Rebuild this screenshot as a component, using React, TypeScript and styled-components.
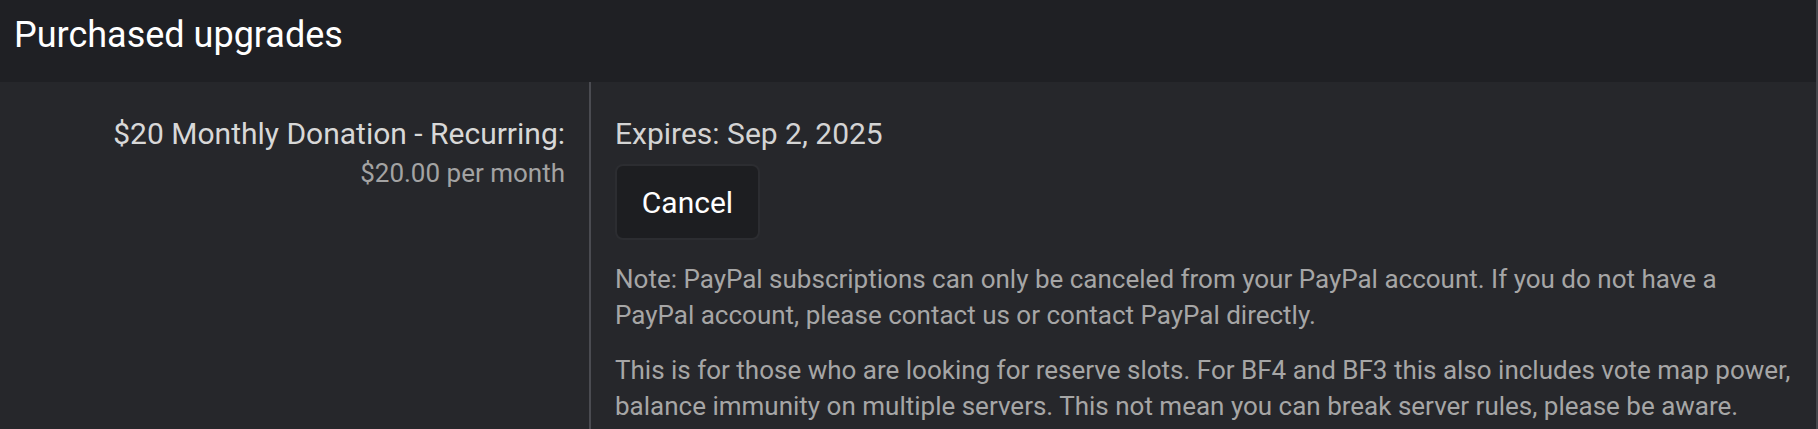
import React from "react"
import styled, { createGlobalStyle } from "styled-components"

const GlobalStyle = createGlobalStyle`
  html, body {
    margin: 0;
    padding: 0;
    background: #26272b;
    font-family: Roboto, "Liberation Sans", sans-serif;
  }
`

const upgrades = [
  {
    title: "$20 Monthly Donation - Recurring:",
    cost: "$20.00 per month",
    expires: "Sep 2, 2025",
    notes: [
      "Note: PayPal subscriptions can only be canceled from your PayPal account. If you do not have a PayPal account, please contact us or contact PayPal directly.",
      "This is for those who are looking for reserve slots. For BF4 and BF3 this also includes vote map power, balance immunity on multiple servers. This not mean you can break server rules, please be aware.",
    ],
  },
]

export default function App() {
  return (
    <>
      <GlobalStyle />
      <Block>
        <BlockHeader>Purchased upgrades</BlockHeader>
        {upgrades.map((u, i) => (
          <FormRow key={i}>
            <Label>
              <LabelTitle>{u.title}</LabelTitle>
              <LabelHint>{u.cost}</LabelHint>
            </Label>
            <Content>
              <Expires>Expires: {u.expires}</Expires>
              <Button type="button">Cancel</Button>
              {u.notes.map((n, j) => (
                <Explain key={j} $first={j === 0}>
                  {n}
                </Explain>
              ))}
            </Content>
          </FormRow>
        ))}
      </Block>
    </>
  )
}

const Block = styled.div`
  border-right: 2px solid #45464c;
  min-height: 429px;
  box-sizing: border-box;
`

const BlockHeader = styled.h2`
  margin: 0;
  height: 82px;
  box-sizing: border-box;
  padding: 10px 14px 0;
  background: #1f2024;
  color: #ffffff;
  font-size: 36px;
  font-weight: 400;
  line-height: 1.4;
`

const FormRow = styled.div`
  display: flex;
  min-height: 347px;
`

const Label = styled.div`
  flex: 0 0 591px;
  box-sizing: border-box;
  border-right: 2px solid #4a4b51;
  padding: 31px 24px 0 0;
  text-align: right;
`

const LabelTitle = styled.div`
  color: #d8d8d8;
  font-size: 30px;
  line-height: 1.4;
`

const LabelHint = styled.div`
  color: #a3a3a3;
  font-size: 26px;
  line-height: 1.4;
`

const Content = styled.div`
  flex: 1;
  padding: 31px 22px 0 24px;
`

const Expires = styled.div`
  color: #d4d4d4;
  font-size: 30px;
  line-height: 1.4;
`

const Button = styled.button`
  display: flex;
  align-items: center;
  justify-content: center;
  margin-top: 9px;
  width: 145px;
  height: 76px;
  box-sizing: border-box;
  background: #1d1e21;
  border: 2px solid #2c2d31;
  border-radius: 8px;
  color: #ffffff;
  font-family: Roboto, "Liberation Sans", sans-serif;
  font-size: 30px;
  padding: 0;
`

const Explain = styled.p<{ $first?: boolean }>`
  margin: ${(p) => (p.$first ? "21px" : "18px")} 0 0;
  color: #a6a6a6;
  font-size: 26px;
  line-height: 1.4;
`
